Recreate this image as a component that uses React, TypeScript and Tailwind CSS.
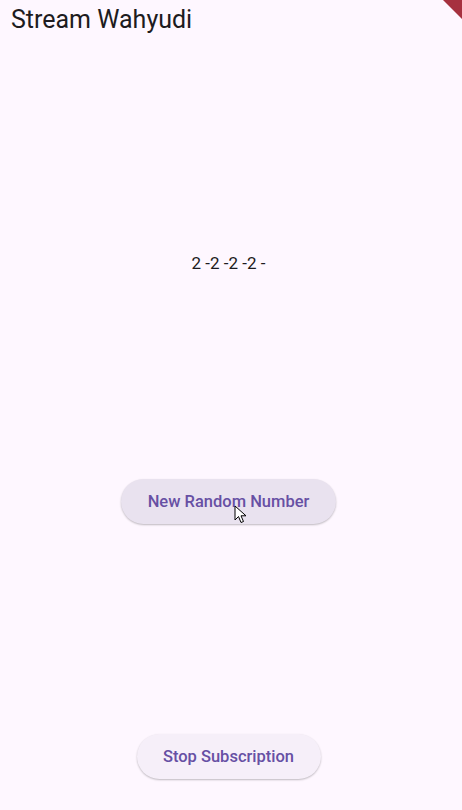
import { useState } from "react";

export default function App() {
  const [values] = useState([2, 2, 2, 2]);

  return (
    <div className="relative h-[810px] w-full overflow-hidden bg-[#fef7ff] font-['Roboto',sans-serif]">
      {/* App bar */}
      <header className="flex h-[38px] items-center px-[11px]">
        <h1 className="text-[25px] leading-none text-[#1d1b20]">Stream Wahyudi</h1>
      </header>

      {/* Body */}
      <main className="flex flex-col items-center pr-[5px]">
        <p className="mt-[216px] text-[17px] leading-[19px] text-[#1d1b20]">
          {values.map((v) => `${v} -`).join("")}
        </p>

        <button className="mt-[206px] h-[45px] w-[215px] rounded-full bg-[#e9e2ef] pt-[2px] text-[16.5px] font-medium text-[#6750a4] shadow-[0_1px_2px_rgba(0,0,0,0.25)]">
          New Random Number
        </button>

        <button className="mt-[210px] h-[45px] w-[184px] rounded-full bg-[#f6eff9] pt-[2px] text-[16.5px] font-medium text-[#6750a4] shadow-[0_1px_2px_rgba(0,0,0,0.25)]">
          Stop Subscription
        </button>
      </main>

      {/* Debug banner corner */}
      <svg className="absolute right-0 top-0" width="20" height="20" viewBox="0 0 20 20">
        <polygon points="1,0 20,0 20,19" fill="#a6313f" />
      </svg>

      {/* Mouse cursor */}
      <svg className="absolute left-[234px] top-[505px]" width="14" height="20" viewBox="0 0 14 20">
        <path d="M1 1 L1 15 L4.5 11.5 L7 17.5 L9.5 16.5 L7 10.8 L12 10.8 Z" fill="#fff" stroke="#000" strokeWidth="1" strokeLinejoin="round" />
      </svg>
    </div>
  );
}
